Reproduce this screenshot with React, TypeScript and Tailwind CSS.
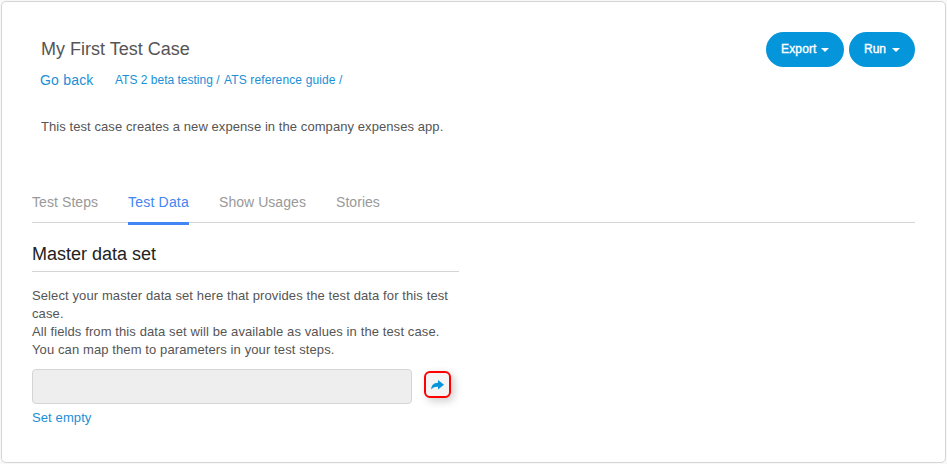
import React from 'react';

function Caret() {
  return (
    <svg width="8" height="4" viewBox="0 0 8 4" className="mt-px shrink-0" fill="currentColor">
      <path d="M0 0h8L4 4z" />
    </svg>
  );
}

function ActionButton({ label, className, labelClass }: { label: string; className: string; labelClass: string }) {
  return (
    <button className={`flex h-[35px] items-center rounded-full bg-[#0595db] pl-[15px] text-left text-xs leading-[18px] text-white [-webkit-text-stroke:0.35px_white] ${className}`}>
      <span className={`shrink-0 pb-px ${labelClass}`}>{label}</span>
      <Caret />
    </button>
  );
}

const tabs = [
  { label: 'Test Steps', active: false, width: 'w-[66px] tracking-[0.08px]' },
  { label: 'Test Data', active: true, width: 'w-[61px] tracking-[0.2px]' },
  { label: 'Show Usages', active: false, width: 'w-[87px] tracking-[0.05px]' },
  { label: 'Stories', active: false, width: 'w-[44px] tracking-[0.05px]' },
];

export default function App() {
  return (
    <div className="h-[464px] w-[947px] bg-[#f8f8f8] pt-px pl-px font-['Liberation_Sans',Arial,sans-serif] text-[#555]">
      <main className="h-[462px] w-[945px] rounded-[5px] border border-[#d5d5d5] bg-white pt-[30px] pr-[30px] pl-[30px]">
        <header className="flex h-[161px] justify-between pl-[9px]">
          <div>
            <h1 className="mt-[6px] text-lg leading-[22px] whitespace-nowrap">My First Test Case</h1>
            <nav className="mt-[10px] flex h-5 items-center whitespace-nowrap text-[#1a8fd6]">
              <a className="-ml-px w-[75px] text-sm leading-5 tracking-[0.2px]">Go back</a>
              <a className="w-[109px] text-xs leading-5">ATS 2 beta testing&nbsp;/</a>
              <a className="text-xs leading-5 tracking-[0.13px]">ATS reference guide&nbsp;/</a>
            </nav>
            <p className="mt-[28px] text-[13px] leading-[18px] tracking-[0.075px] whitespace-nowrap">
              This test case creates a new expense in the company expenses app.
            </p>
          </div>
          <div className="flex gap-[5px]">
            <ActionButton label="Export" className="w-[78px]" labelClass="w-10 tracking-[0.15px]" />
            <ActionButton label="Run" className="w-[66px]" labelClass="w-7" />
          </div>
        </header>
        <div className="flex h-[30px] gap-[30px] border-b border-[#d5d5d5] text-sm leading-[18px] whitespace-nowrap text-[#999]">
          {tabs.map((tab) => (
            <div
              key={tab.label}
              className={`${tab.width} ${tab.active ? 'h-8 border-b-[3px] border-[#4285f4] text-[#4285f4]' : ''}`}
            >
              {tab.label}
            </div>
          ))}
        </div>
        <section className="w-[427px]">
          <h2 className="h-[49px] border-b border-[#d5d5d5] pt-5 text-lg leading-[22px] text-[#222]">Master data set</h2>
          <p className="mt-[15px] text-[13px] leading-[18px] tracking-[0.105px] whitespace-nowrap">
            Select your master data set here that provides the test data for this test
            <br />
            case.
            <br />
            All fields from this data set will be available as values in the test case.
            <br />
            You can map them to parameters in your test steps.
          </p>
          <div className="mt-[10px] flex">
            <div className="h-[35px] w-[380px] rounded-[4px] border border-[#d5d5d5] bg-[#eee]" />
            <button className="mt-[2px] ml-3 flex size-[27px] items-center justify-center rounded-[6px] border-2 border-[#f00] bg-[#f4f4f4] shadow-[3px_3px_8px_rgba(0,0,0,0.2)]">
              <svg width="13" height="10" viewBox="0 0 13 10" fill="#0595db">
                <path d="M7 0 13 4.8 7 9.6V6.8C4.5 6.6 2 7.2.3 9.6.1 5.5 2.7 2.9 7 2.8z" />
              </svg>
            </button>
          </div>
          <a className="mt-[5px] block text-[13px] leading-[18px] tracking-[0.105px] text-[#1a8fd6]">Set empty</a>
        </section>
      </main>
    </div>
  );
}
